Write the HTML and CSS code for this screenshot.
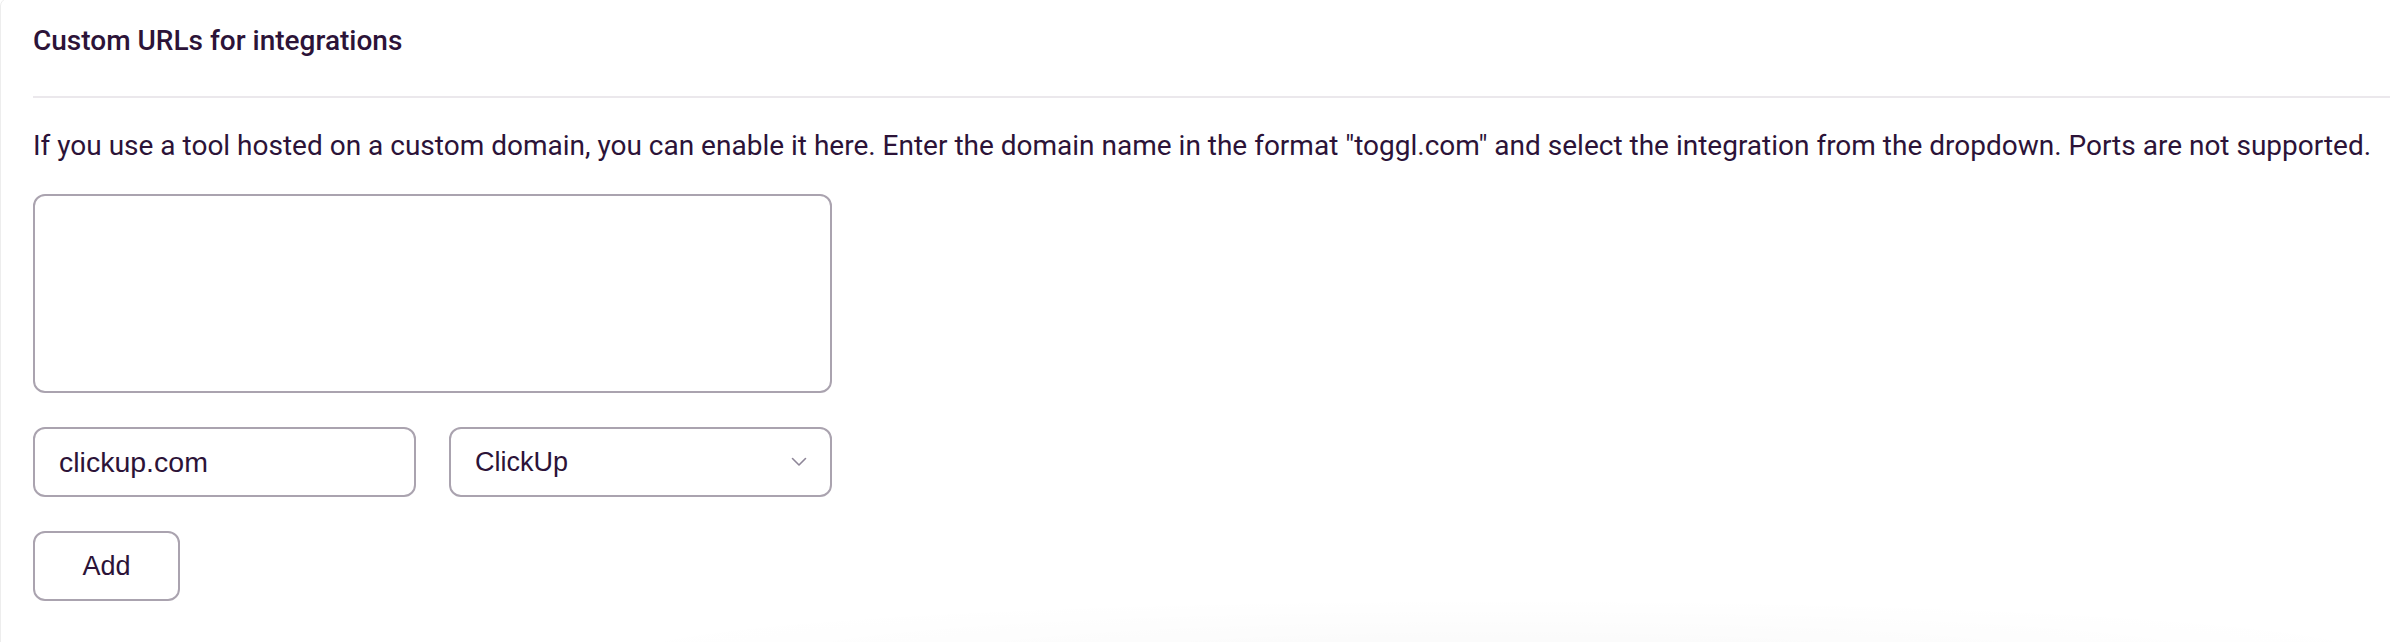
FILE: index.html
```html
<!DOCTYPE html>
<html lang="en">
<head>
<meta charset="utf-8">
<title>Custom URLs for integrations</title>
<link rel="stylesheet" href="styles.css">
</head>
<body>
<section class="card">
  <header class="card-header">
    <h2 class="card-title">Custom URLs for integrations</h2>
  </header>
  <div class="card-body">
    <p class="description">If you use a tool hosted on a custom domain, you can enable it here. Enter the domain name in the format "toggl.com" and select the integration from the dropdown. Ports are not supported.</p>
    <textarea class="url-list" aria-label="Custom URLs"></textarea>
    <div class="form-row">
      <input class="field" type="text" value="clickup.com" aria-label="Domain">
      <div class="select">
        <span class="select-value">ClickUp</span>
        <svg class="chevron" width="16" height="10" viewBox="0 0 16 10" aria-hidden="true"><polyline points="1.5,1.5 8,8 14.5,1.5" fill="none" stroke="#8e8698" stroke-width="1.6" stroke-linecap="round" stroke-linejoin="round"/></svg>
      </div>
    </div>
    <button class="btn" type="button">Add</button>
  </div>
</section>
</body>
</html>
```
FILE: styles.css
```css
html, body {
  margin: 0;
  padding: 0;
  background: #ffffff;
  overflow: hidden;
}

body {
  width: 2390px;
  height: 642px;
}

.card {
  box-sizing: border-box;
  width: 2420px;
  height: 660px;
  margin-top: -2px;
  border: 1px solid #ededed;
  border-radius: 8px;
  color: #2c1338;
  font-family: Roboto, "Liberation Sans", sans-serif;
  background-image: radial-gradient(ellipse 950px 60px at 1500px 100%, rgba(0, 0, 0, 0.022), rgba(0, 0, 0, 0) 100%);
}

.card-header {
  margin-left: 32px;
  padding: 22px 0 35px;
  border-bottom: 2px solid #ebe8ec;
}

.card-title {
  margin: 0;
  font-size: 28px;
  line-height: 40px;
  font-weight: 500;
}

.card-body {
  padding: 0 32px;
  display: flex;
  flex-direction: column;
  align-items: flex-start;
}

.description {
  margin: 28px 0 0;
  font-size: 28px;
  line-height: 40px;
  white-space: nowrap;
}

.url-list,
.field,
.select,
.btn {
  box-sizing: border-box;
  border: 2px solid #aaa3af;
  border-radius: 12px;
  background: #ffffff;
  color: #2c1338;
  font-family: "Liberation Sans", Arial, sans-serif;
  font-size: 27px;
}

.url-list {
  margin-top: 28px;
  width: 799px;
  height: 199px;
  resize: none;
  padding: 16px 24px;
  outline: none;
}

.form-row {
  margin-top: 34px;
  display: flex;
  gap: 33px;
}

.field {
  width: 383px;
  height: 70px;
  padding: 0 24px;
  font-size: 28.5px;
  outline: none;
}

.select {
  width: 383px;
  height: 70px;
  padding: 0 23px 0 24px;
  display: flex;
  align-items: center;
  justify-content: space-between;
}

.chevron {
  display: block;
}

.btn {
  margin-top: 34px;
  width: 147px;
  height: 70px;
  padding: 0;
  cursor: pointer;
}
```
